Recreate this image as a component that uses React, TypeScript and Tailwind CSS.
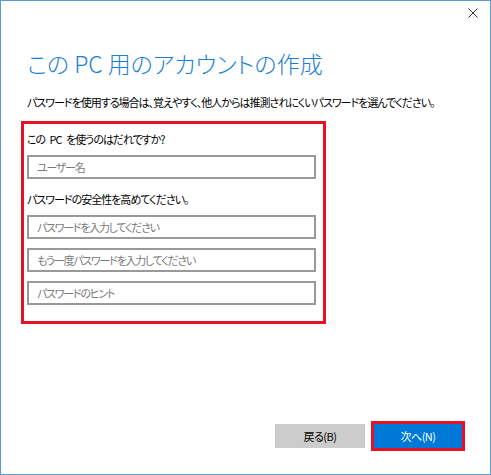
const jp = "font-['Noto_Sans_CJK_JP','Noto_Sans',sans-serif] [font-feature-settings:'palt']";

function Field({ placeholder, className = "" }: { placeholder: string; className?: string }) {
  return (
    <div
      className={`w-[289px] h-[24px] border-2 border-[#999999] bg-white flex items-center pl-[8px] text-[11px] tracking-[-1.25px] text-[#7a7a7a] ${className}`}
    >
      {placeholder}
    </div>
  );
}

export default function App() {
  return (
    <div className={`w-[491px] h-[475px] bg-white border border-[#5b9bd5] flex flex-col ${jp}`}>
      {/* title bar */}
      <div className="h-[24px] flex items-center justify-end pr-[12px]">
        <svg width="10" height="10" viewBox="0 0 10 10">
          <path d="M0.5 0.5 L9.5 9.5 M9.5 0.5 L0.5 9.5" stroke="#333333" strokeWidth="1" fill="none" />
        </svg>
      </div>

      <div className="flex flex-col pl-[20px]">
        <h1 className="mt-[24px] pl-[6px] text-[23px] leading-[28px] font-light text-[#1a80d6] whitespace-nowrap">
          この PC 用のアカウントの作成
        </h1>
        <p className="mt-[17px] pl-[6px] text-[11px] leading-[16px] tracking-[-1px] text-black whitespace-nowrap">
          パスワードを使用する場合は、覚えやすく、他人からは推測されにくいパスワードを選んでください。
        </p>

        <div className="mt-[11px] w-[305px] border-[3px] border-[#e81123] pt-[7px] pl-[3px] pb-[16px] flex flex-col">
          <div className="text-[11px] leading-[16px] tracking-[-1px] [word-spacing:3px] text-black">
            この PC を使うのはだれですか?
          </div>
          <Field placeholder="ユーザー名" className="mt-[8px]" />
          <div className="mt-[12px] text-[11px] leading-[16px] tracking-[-1px] text-black">
            パスワードの安全性を高めてください。
          </div>
          <Field placeholder="パスワードを入力してください" className="mt-[8px]" />
          <Field placeholder="もう一度パスワードを入力してください" className="mt-[9px]" />
          <Field placeholder="パスワードのヒント" className="mt-[9px]" />
        </div>
      </div>

      {/* footer buttons */}
      <div className="mt-auto mb-[23px] mr-[25px] flex items-center justify-end gap-[6px]">
        <div className="w-[90px] h-[24px] bg-[#cccccc] flex items-center justify-center text-[11px] tracking-[-0.5px] text-black">
          戻る(B)
        </div>
        <div className="border-[3px] border-[#e81123]">
          <div className="w-[88px] h-[24px] bg-[#0078d7] flex items-center justify-center text-[11px] tracking-[-0.5px] text-white">
            次へ(N)
          </div>
        </div>
      </div>
    </div>
  );
}
